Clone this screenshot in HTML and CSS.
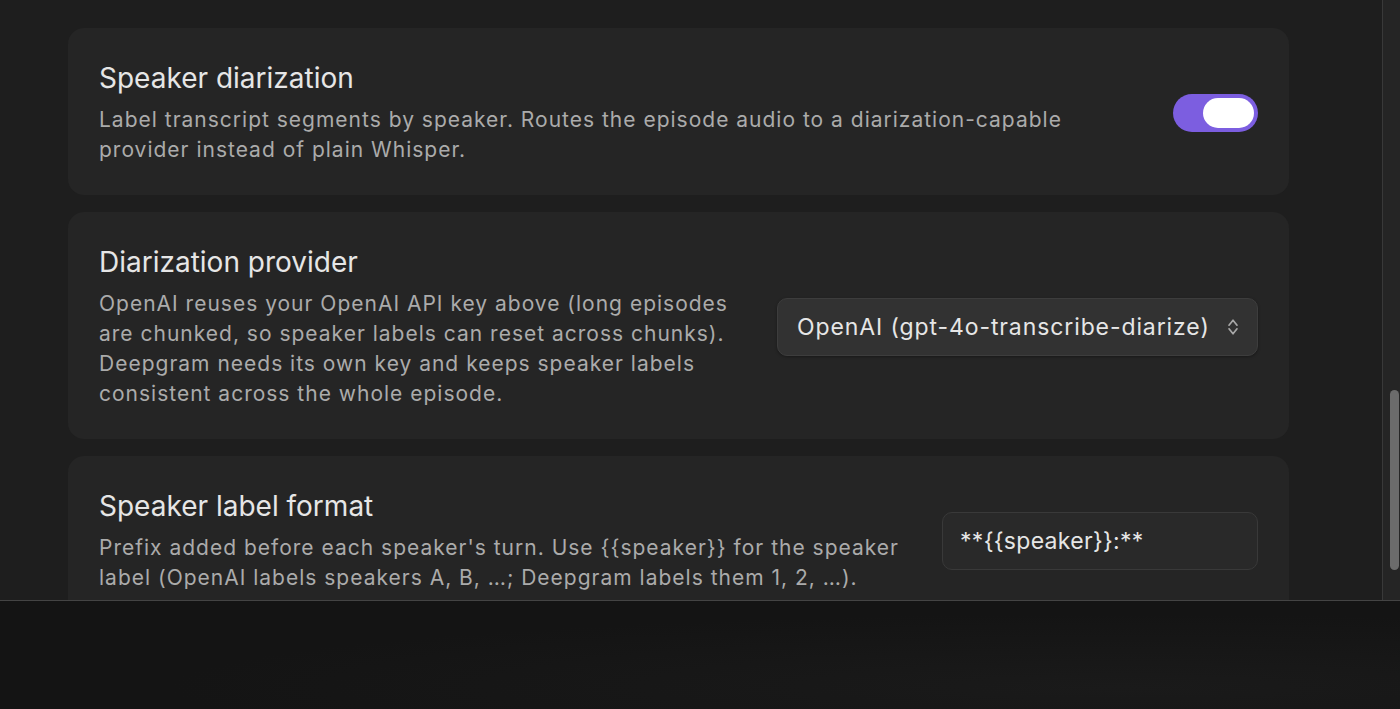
FILE: index.html
```html
<!DOCTYPE html>
<html lang="en">
<head>
<meta charset="utf-8">
<title>Settings</title>
<link rel="stylesheet" href="styles.css">
</head>
<body>
<div class="window">
  <main class="content">
    <section class="card">
      <div class="text">
        <h2 class="title">Speaker diarization</h2>
        <p class="desc">Label transcript segments by speaker. Routes the episode audio to a diarization-capable provider instead of plain Whisper.</p>
      </div>
      <div class="toggle on"><span class="knob"></span></div>
    </section>
    <section class="card">
      <div class="text">
        <h2 class="title">Diarization provider</h2>
        <p class="desc">OpenAI reuses your OpenAI API key above (long episodes are chunked, so speaker labels can reset across chunks). Deepgram needs its own key and keeps speaker labels consistent across the whole episode.</p>
      </div>
      <div class="select">
        <span class="select-label">OpenAI (gpt-4o-transcribe-diarize)</span>
        <svg class="chevrons" width="12" height="18" viewBox="0 0 12 18" fill="none" stroke="#a8a8a8" stroke-width="1.7" stroke-linecap="round" stroke-linejoin="round"><path d="M2 7.2 L6 2.2 L10 7.2"/><path d="M2 10.8 L6 15.8 L10 10.8"/></svg>
      </div>
    </section>
    <section class="card">
      <div class="text">
        <h2 class="title">Speaker label format</h2>
        <p class="desc">Prefix added before each speaker's turn. Use {{speaker}} for the speaker label (OpenAI labels speakers A, B, …; Deepgram labels them 1, 2, …).</p>
      </div>
      <div class="input">**{{speaker}}:**</div>
    </section>
  </main>
  <aside class="scrollbar"><div class="thumb"></div></aside>
</div>
<div class="desktop"></div>
</body>
</html>
```

FILE: styles.css
```css
* { box-sizing: border-box; }
html, body { margin: 0; padding: 0; }
body {
  background: #141414;
  font-family: Inter, "Noto Sans", sans-serif;
  width: 1400px;
  height: 709px;
  overflow: hidden;
}
.window {
  height: 601px;
  display: flex;
  background: #1e1e1e;
  border-bottom: 1px solid #444444;
  overflow: hidden;
}
.content {
  flex: 1;
  padding: 28px 93px 0 68px;
  display: flex;
  flex-direction: column;
  gap: 17px;
}
.card {
  flex-shrink: 0;
  background: #252525;
  border-radius: 16px;
  padding: 32px 31px 30px;
  display: flex;
  align-items: center;
  gap: 40px;
}
.text { flex: 1; min-width: 0; }
.title {
  margin: 0 0 9px;
  font-size: 28px;
  line-height: 36px;
  font-weight: 400;
  color: #e6e6e6;
  letter-spacing: 0;
}
.desc {
  margin: 0;
  font-size: 21px;
  line-height: 30px;
  color: #ababab;
  letter-spacing: 1px;
}
.toggle {
  flex-shrink: 0;
  width: 85px;
  height: 38px;
  border-radius: 19px;
  background: #7c5ee0;
  display: flex;
  align-items: center;
  justify-content: flex-end;
  padding: 0 4px;
}
.knob {
  width: 51px;
  height: 30px;
  border-radius: 15px;
  background: #ffffff;
}
.select {
  flex-shrink: 0;
  width: 481px;
  height: 58px;
  border-radius: 10px;
  background: #323232;
  border: 1px solid #3d3d3d;
  box-shadow: 0 1px 3px rgba(0,0,0,0.35);
  display: flex;
  align-items: center;
  justify-content: space-between;
  padding: 0 18px 0 19px;
  color: #e6e6e6;
  font-size: 23px;
  letter-spacing: 0.9px;
}
.input {
  flex-shrink: 0;
  width: 316px;
  height: 58px;
  border-radius: 10px;
  background: #292929;
  border: 1px solid #393939;
  display: flex;
  align-items: center;
  padding: 0 17px;
  color: #e6e6e6;
  font-size: 23px;
  letter-spacing: 0.3px;
}
.scrollbar {
  width: 18px;
  flex-shrink: 0;
  background: #252525;
  border-left: 1px solid #393939;
  padding: 390px 1px 0 7px;
}
.thumb {
  width: 9px;
  height: 180px;
  border-radius: 5px;
  background: #6b6b6b;
}
.desktop {
  height: 108px;
  background: radial-gradient(ellipse at 80% 80%, #1a1a1a 0%, #141414 60%);
}
```
